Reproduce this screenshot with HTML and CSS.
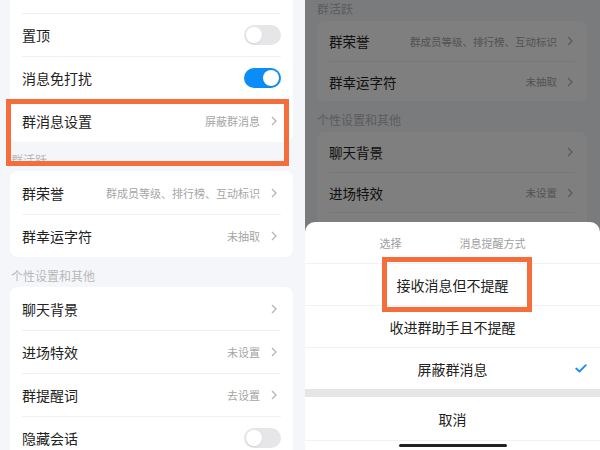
FILE: index.html
```html
<!DOCTYPE html>
<html lang="zh-CN">
<head>
    <meta charset="UTF-8">
    <meta name="viewport" content="width=device-width, initial-scale=1.0">
    <title>群聊设置</title>
    <link rel="stylesheet" href="styles.css">
</head>
<body>
    <div class="screens">
        <div class="screen screen-left">
            <div class="card card-top">
                <div class="row row-cut"></div>
                <div class="row">
                    <span class="row-title">置顶</span>
                    <span class="switch"></span>
                </div>
                <div class="row">
                    <span class="row-title">消息免打扰</span>
                    <span class="switch on"></span>
                </div>
                <div class="row">
                    <span class="row-title">群消息设置</span>
                    <span class="row-value">屏蔽群消息</span>
                    <svg class="chevron" width="6" height="10" viewBox="0 0 6 10"><polyline points="1,1 5,5 1,9"/></svg>
                </div>
            </div>

            <div class="group-label first">群活跃</div>
            <div class="card">
                <div class="row">
                    <span class="row-title">群荣誉</span>
                    <span class="row-value">群成员等级、排行榜、互动标识</span>
                    <svg class="chevron" width="6" height="10" viewBox="0 0 6 10"><polyline points="1,1 5,5 1,9"/></svg>
                </div>
                <div class="row">
                    <span class="row-title">群幸运字符</span>
                    <span class="row-value">未抽取</span>
                    <svg class="chevron" width="6" height="10" viewBox="0 0 6 10"><polyline points="1,1 5,5 1,9"/></svg>
                </div>
            </div>

            <div class="group-label">个性设置和其他</div>
            <div class="card">
                <div class="row">
                    <span class="row-title">聊天背景</span>
                    <span class="row-value"></span>
                    <svg class="chevron" width="6" height="10" viewBox="0 0 6 10"><polyline points="1,1 5,5 1,9"/></svg>
                </div>
                <div class="row">
                    <span class="row-title">进场特效</span>
                    <span class="row-value">未设置</span>
                    <svg class="chevron" width="6" height="10" viewBox="0 0 6 10"><polyline points="1,1 5,5 1,9"/></svg>
                </div>
                <div class="row">
                    <span class="row-title">群提醒词</span>
                    <span class="row-value">去设置</span>
                    <svg class="chevron" width="6" height="10" viewBox="0 0 6 10"><polyline points="1,1 5,5 1,9"/></svg>
                </div>
                <div class="row">
                    <span class="row-title">隐藏会话</span>
                    <span class="switch"></span>
                </div>
            </div>

            <div class="mark mark-left"></div>
        </div>

        <div class="screen screen-right">
            <div class="page">
                <div class="group-label first">群活跃</div>
                <div class="card">
                    <div class="row">
                        <span class="row-title">群荣誉</span>
                        <span class="row-value">群成员等级、排行榜、互动标识</span>
                        <svg class="chevron" width="6" height="10" viewBox="0 0 6 10"><polyline points="1,1 5,5 1,9"/></svg>
                    </div>
                    <div class="row">
                        <span class="row-title">群幸运字符</span>
                        <span class="row-value">未抽取</span>
                        <svg class="chevron" width="6" height="10" viewBox="0 0 6 10"><polyline points="1,1 5,5 1,9"/></svg>
                    </div>
                </div>

                <div class="group-label">个性设置和其他</div>
                <div class="card">
                    <div class="row">
                        <span class="row-title">聊天背景</span>
                        <span class="row-value"></span>
                        <svg class="chevron" width="6" height="10" viewBox="0 0 6 10"><polyline points="1,1 5,5 1,9"/></svg>
                    </div>
                    <div class="row">
                        <span class="row-title">进场特效</span>
                        <span class="row-value">未设置</span>
                        <svg class="chevron" width="6" height="10" viewBox="0 0 6 10"><polyline points="1,1 5,5 1,9"/></svg>
                    </div>
                    <div class="row">
                        <span class="row-title">群提醒词</span>
                        <span class="row-value">去设置</span>
                        <svg class="chevron" width="6" height="10" viewBox="0 0 6 10"><polyline points="1,1 5,5 1,9"/></svg>
                    </div>
                </div>
            </div>

            <div class="mask"></div>

            <div class="sheet">
                <div class="sheet-head">
                    <span>选择</span>
                    <span>消息提醒方式</span>
                </div>
                <div class="option"><span class="option-text">接收消息但不提醒</span></div>
                <div class="option"><span class="option-text">收进群助手且不提醒</span></div>
                <div class="option">
                    <span class="option-text">屏蔽群消息</span>
                    <svg class="check" width="12" height="9" viewBox="0 0 12 9"><polyline points="1.2,4.5 4.5,7.5 10.8,1.2"/></svg>
                </div>
                <div class="sheet-gap"></div>
                <div class="option cancel"><span class="option-text">取消</span></div>
                <div class="sheet-foot"><span class="home-bar"></span></div>
            </div>

            <div class="mark mark-right"></div>
        </div>
    </div>
</body>
</html>
```

FILE: styles.css
```css
body {
    margin: 0;
    padding: 0;
    font-family: "Noto Sans CJK SC", "Noto Sans", sans-serif;
    background-color: #f5f6fa;
    color: #222;
}

.screens {
    display: flex;
    width: 600px;
    height: 450px;
    overflow: hidden;
}

.screen {
    position: relative;
    height: 450px;
    overflow: hidden;
    background-color: #f5f6fa;
}

.screen-left {
    width: 305px;
}

.screen-right {
    width: 295px;
}

/* cards and rows */

.card {
    margin: 0 12px 0 10px;
    background: #fff;
    border-radius: 8px;
}

.card-top {
    border-radius: 0 0 8px 8px;
}

.row {
    display: flex;
    align-items: center;
    height: 43px;
    margin: 0 12px;
    border-top: 1px solid #f1f1f3;
    box-sizing: border-box;
}

.card .row:first-child {
    border-top: none;
}

.row-cut {
    height: 13px;
}

.row-title {
    font-size: 14px;
    color: #222;
    white-space: nowrap;
}

.row-value {
    margin-left: auto;
    font-size: 11px;
    color: #a6a6a6;
    white-space: nowrap;
}

.chevron {
    margin: 0 4px 0 11px;
    fill: none;
    stroke: #b5b5b5;
    stroke-width: 1.3;
}

.group-label {
    padding: 11px 0 3px 11px;
    font-size: 12px;
    line-height: 16px;
    color: #b8b8b8;
}

.group-label.first {
    padding-top: 10px;
}

/* switches */

.switch {
    position: relative;
    margin-left: auto;
    width: 37px;
    height: 20px;
    border-radius: 10px;
    background-color: #e6e6e8;
}

.switch::after {
    content: "";
    position: absolute;
    top: 2px;
    left: 2px;
    width: 16px;
    height: 16px;
    border-radius: 50%;
    background: #fff;
    box-shadow: 0 1px 2px rgba(0, 0, 0, 0.08);
}

.switch.on {
    background-color: #0b8df7;
}

.switch.on::after {
    left: 19px;
}

/* annotation boxes */

.mark {
    position: absolute;
    border: 5px solid #f56d3b;
    box-sizing: border-box;
}

.mark-left {
    left: 6px;
    top: 99px;
    width: 283px;
    height: 67px;
}

.mark-right {
    left: 77px;
    top: 257px;
    width: 150px;
    height: 55px;
}

/* right screen: page under the sheet */

.page .group-label {
    padding: 11px 0 4px 12px;
}

.page .group-label.first {
    padding: 1px 0 4px 12px;
}

.page .card {
    margin: 0 13px 0 12px;
}

.page .row {
    height: 40px;
}

.page .row-title {
    font-size: 13.5px;
}

.page .row-value {
    font-size: 10.5px;
}

.page .chevron {
    margin: 0 2px 0 10px;
}

.mask {
    position: absolute;
    inset: 0;
    background: rgba(0, 0, 0, 0.5);
}

.sheet {
    position: absolute;
    left: 0;
    right: 0;
    bottom: 0;
    background: #fff;
    border-radius: 10px 10px 0 0;
}

.sheet-head {
    display: flex;
    justify-content: center;
    align-items: center;
    gap: 58px;
    height: 41px;
    font-size: 11px;
    color: #a0a0a0;
}

.option {
    position: relative;
    display: flex;
    justify-content: center;
    align-items: center;
    height: 42px;
    border-top: 1px solid #f2f2f2;
    box-sizing: border-box;
}

.option-text {
    font-size: 14px;
    color: #222;
}

.check {
    position: absolute;
    right: 13px;
    top: 16px;
    fill: none;
    stroke: #1a8cf6;
    stroke-width: 1.8;
    stroke-linecap: round;
    stroke-linejoin: round;
}

.sheet-gap {
    height: 8px;
    background: #e6e6e6;
}

.option.cancel {
    height: 43px;
    border-top: none;
}

.sheet-foot {
    display: flex;
    justify-content: center;
    height: 10px;
    border-top: 1px solid #f2f2f2;
    box-sizing: border-box;
    padding-top: 3px;
}

.home-bar {
    width: 108px;
    height: 3px;
    border-radius: 2px;
    background: #222;
}
```
